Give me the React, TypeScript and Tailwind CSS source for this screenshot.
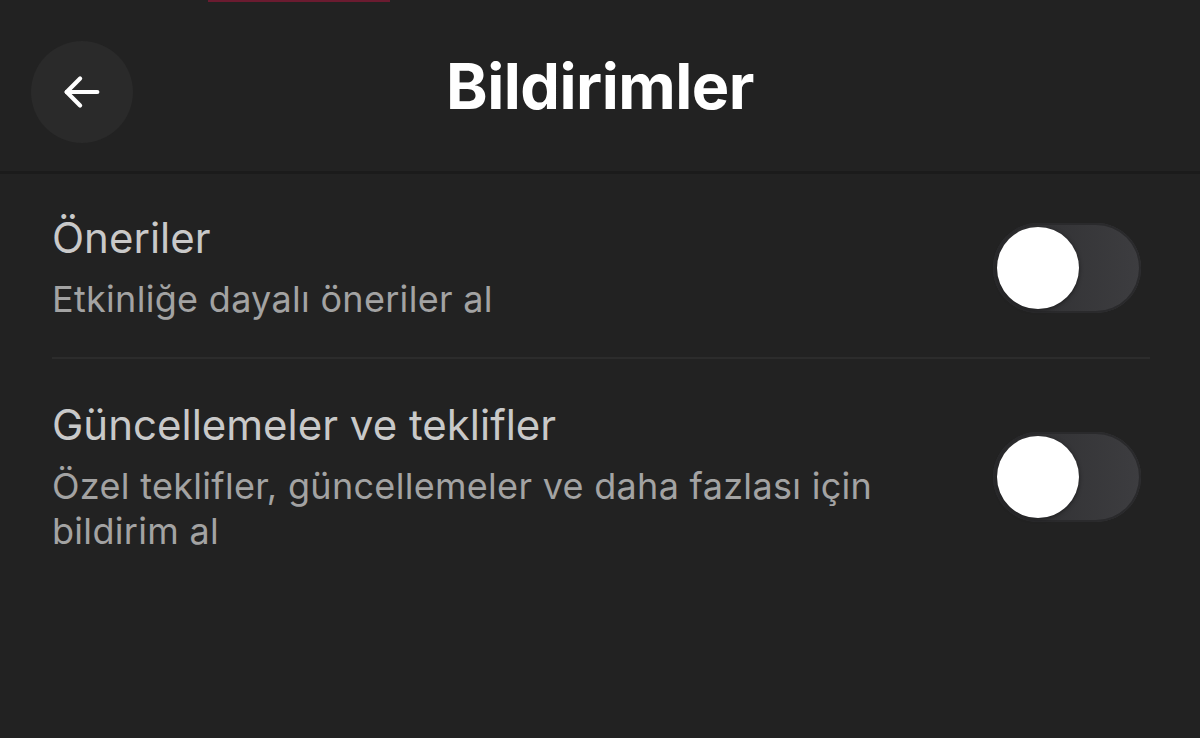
import { useState } from "react";

function Toggle({ on, onChange }: { on: boolean; onChange: (v: boolean) => void }) {
  return (
    <button
      onClick={() => onChange(!on)}
      className="relative mr-[9px] h-[90px] w-[148px] shrink-0 rounded-full bg-gradient-to-r from-[#2e2e30] to-[#3d3d40] shadow-[inset_0_0_0_2px_#2a2a2c]"
    >
      <span
        className={
          "absolute top-[4px] h-[82px] w-[82px] rounded-full bg-white shadow-[0_1px_4px_rgba(0,0,0,0.5)] " +
          (on ? "left-[62px]" : "left-[4px]")
        }
      />
    </button>
  );
}

function SettingRow({
  title,
  desc,
  on,
  onChange,
}: {
  title: string;
  desc: string;
  on: boolean;
  onChange: (v: boolean) => void;
}) {
  return (
    <div className="flex items-center justify-between gap-6">
      <div className="max-w-[860px]">
        <div className="text-[42px] leading-[50px] text-[#c9c9c9]">{title}</div>
        <div className="mt-[14px] text-[36px] leading-[45px] tracking-[0.3px] text-[#a3a3a3]">{desc}</div>
      </div>
      <Toggle on={on} onChange={onChange} />
    </div>
  );
}

export default function App() {
  const [suggestions, setSuggestions] = useState(false);
  const [updates, setUpdates] = useState(false);

  return (
    <div className="relative h-[738px] w-[1200px] overflow-hidden bg-[#222222] font-['Inter',sans-serif]">
      {/* status bar remnant */}
      <div className="absolute left-[208px] top-0 h-[2px] w-[182px] bg-[#6b1b30]" />

      {/* header */}
      <header className="relative flex h-[174px] items-center justify-center border-b-[3px] border-[#1b1b1b]">
        <button className="absolute left-[31px] top-[41px] flex h-[102px] w-[102px] items-center justify-center rounded-full bg-[#2a2a2a]">
          <svg width="46" height="46" viewBox="0 0 24 24" fill="none" stroke="white" strokeWidth="2.2" strokeLinecap="round" strokeLinejoin="round">
            <path d="M20 12H4" />
            <path d="M11 5l-7 7 7 7" />
          </svg>
        </button>
        <h1 className="mt-[2px] text-[63px] font-bold tracking-[-0.5px] text-white">
          Bildirimler
        </h1>
      </header>

      <div className="pl-[52px] pr-[50px]">
        <div className="border-b-2 border-[#2c2c2c] pb-[35px] pt-[39px]">
          <SettingRow
            title="Öneriler"
            desc="Etkinliğe dayalı öneriler al"
            on={suggestions}
            onChange={setSuggestions}
          />
        </div>
        <div className="pt-[41px]">
          <SettingRow
            title="Güncellemeler ve teklifler"
            desc="Özel teklifler, güncellemeler ve daha fazlası için bildirim al"
            on={updates}
            onChange={setUpdates}
          />
        </div>
      </div>
    </div>
  );
}
